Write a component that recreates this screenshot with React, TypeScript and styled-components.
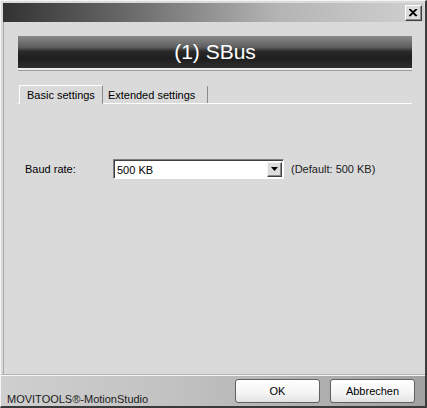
import React from 'react';
import styled, { createGlobalStyle } from 'styled-components';

const GlobalStyle = createGlobalStyle`
  html, body {
    margin: 0;
    padding: 0;
    background: #d9d9d9;
  }
  body {
    font-family: "Liberation Sans", Arial, sans-serif;
    font-size: 11px;
    color: #000;
  }
`;

const Window = styled.div`
  width: 427px;
  height: 408px;
  box-sizing: border-box;
  background: #dadada;
  border-left: 1px solid #f4f4f4;
  border-top: 1px solid #f4f4f4;
  border-right: 2px solid #3a3a3a;
  border-bottom: 2px solid #3a3a3a;
  display: flex;
  flex-direction: column;
  padding: 2px 0 0 2px;
`;

const TitleBar = styled.div`
  height: 19px;
  margin-right: 1px;
  background: linear-gradient(to right, #323232 0%, #6a6a6a 30%, #b4b4b4 65%, #d0d0d0 100%);
  display: flex;
  justify-content: flex-end;
  align-items: center;
  padding-right: 2px;
`;

const CloseButton = styled.button`
  width: 17px;
  height: 16px;
  padding: 0;
  background: #dcdcdc;
  border: 1px solid;
  border-color: #ffffff #404040 #404040 #ffffff;
  box-shadow: inset -1px -1px 0 #8a8a8a;
  display: flex;
  align-items: center;
  justify-content: center;
`;

const Body = styled.div`
  flex: 1;
  display: flex;
  flex-direction: column;
  padding: 14px 13px 0 14px;
  border-left: 1px solid #a8a8a8;
`;

const Banner = styled.div`
  height: 32px;
  background: linear-gradient(to bottom, #8a8a8a 0%, #5e5e5e 35%, #2a2a2a 48%, #1e1e1e 70%, #2e2e2e 100%);
  border-bottom: 2px solid #ececec;
  color: #fff;
  font-size: 21px;
  display: flex;
  align-items: center;
  justify-content: center;
  box-shadow: 0 1px 0 #9a9a9a;
`;

const TabStrip = styled.div`
  margin-top: 14px;
  display: flex;
  align-items: flex-end;
  border-bottom: 1px solid #ffffff;
  height: 19px;
  padding-left: 1px;
`;

const Tab = styled.div<{ $active?: boolean }>`
  height: ${(p) => (p.$active ? '19px' : '17px')};
  box-sizing: border-box;
  padding: 0 ${(p) => (p.$active ? '7px' : '12px')} 0 ${(p) => (p.$active ? '7px' : '5px')};
  display: flex;
  align-items: center;
  background: #dadada;
  margin-bottom: ${(p) => (p.$active ? '-1px' : '0')};
  border-top: ${(p) => (p.$active ? '1px solid #ffffff' : 'none')};
  border-left: ${(p) => (p.$active ? '1px solid #ffffff' : 'none')};
  border-right: 1px solid #8a8a8a;
`;

const Content = styled.div`
  flex: 1;
  padding: 55px 0 0 7px;
`;

const FieldRow = styled.div`
  display: flex;
  align-items: center;
`;

const Label = styled.div`
  width: 88px;
`;

const Combo = styled.div`
  width: 171px;
  height: 20px;
  box-sizing: border-box;
  background: #fff;
  border: 1px solid;
  border-color: #808080 #ffffff #ffffff #808080;
  box-shadow: inset 1px 1px 0 #404040;
  display: flex;
  align-items: center;
  padding: 1px 1px 1px 3px;
`;

const ComboText = styled.div`
  flex: 1;
  padding-top: 1px;
`;

const DropButton = styled.div`
  width: 15px;
  height: 15px;
  box-sizing: border-box;
  background: #dcdcdc;
  border: 1px solid;
  border-color: #f4f4f4 #404040 #404040 #f4f4f4;
  box-shadow: inset -1px -1px 0 #8a8a8a;
  display: flex;
  align-items: center;
  justify-content: center;
`;

const Hint = styled.div`
  margin-left: 7px;
  color: #202020;
`;

const Footer = styled.div`
  height: 30px;
  margin-left: -2px;
  border-top: 1px solid #f6f6f6;
  background: linear-gradient(to right, #cfcfcf 0%, #c2c2c2 40%, #a2a2a2 100%);
  display: flex;
  align-items: center;
  padding: 0 10px 0 6px;
  box-shadow: 0 -1px 0 #b4b4b4;
`;

const Brand = styled.div`
  flex: 1;
  align-self: flex-end;
  padding-bottom: 1px;
  color: #1a1a1a;
  font-size: 11px;
`;

const Button = styled.button`
  width: 85px;
  height: 24px;
  margin-left: 10px;
  font-family: "Liberation Sans", Arial, sans-serif;
  font-size: 11px;
  color: #000;
  background: linear-gradient(to bottom, #ffffff 0%, #f4f4f4 60%, #e2e2e2 100%);
  border: 1px solid #606060;
  border-radius: 3px;
  padding: 0;
`;

export default function App() {
  return (
    <>
      <GlobalStyle />
      <Window>
        <TitleBar>
          <CloseButton aria-label="Close">
            <svg width="9" height="8" viewBox="0 0 9 8">
              <path d="M1 0 L8 7 M0 0 L7 7 M8 0 L1 7 M7 0 L0 7" stroke="#000" strokeWidth="1.2" />
            </svg>
          </CloseButton>
        </TitleBar>
        <Body>
          <Banner>(1) SBus</Banner>
          <TabStrip>
            <Tab $active>Basic settings</Tab>
            <Tab>Extended settings</Tab>
          </TabStrip>
          <Content>
            <FieldRow>
              <Label>Baud rate:</Label>
              <Combo>
                <ComboText>500 KB</ComboText>
                <DropButton>
                  <svg width="7" height="4" viewBox="0 0 7 4">
                    <path d="M0 0 H7 L3.5 4 Z" fill="#000" />
                  </svg>
                </DropButton>
              </Combo>
              <Hint>(Default: 500 KB)</Hint>
            </FieldRow>
          </Content>
        </Body>
        <Footer>
          <Brand>MOVITOOLS®-MotionStudio</Brand>
          <Button>OK</Button>
          <Button>Abbrechen</Button>
        </Footer>
      </Window>
    </>
  );
}
